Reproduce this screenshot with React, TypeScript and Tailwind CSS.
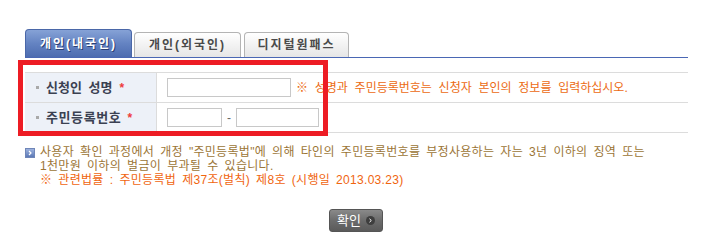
import React from "react";

const font = { fontFamily: '"Liberation Sans", "Noto Sans CJK KR", sans-serif' };

function Tab({ label, active, w }: { label: string; active?: boolean; w: string }) {
  if (active) {
    return (
      <div
        className={`${w} h-[28px] rounded-t-[4px] border border-b-0 border-[#4a67a8] bg-gradient-to-b from-[#86a2d6] via-[#6483c2] to-[#4d6cb0] flex items-center justify-center`}
      >
        <span className="text-[12px] font-bold text-white tracking-[2px] [text-shadow:1px_1px_0_#2b3f73]">{label}</span>
      </div>
    );
  }
  return (
    <div
      className={`${w} h-[25px] rounded-t-[4px] border border-b-0 border-[#b4b4b4] bg-gradient-to-b from-white to-[#e6e6e6] flex items-center justify-center`}
    >
      <span className="text-[12px] font-bold text-[#4a4a4a] tracking-[2px]">{label}</span>
    </div>
  );
}

export default function App() {
  return (
    <div className="relative w-[713px] h-[248px] bg-white overflow-hidden" style={font}>
      <div className="pl-[25px] pt-[29px] w-[688px]">
        {/* Tabs */}
        <div className="flex items-end gap-[2px] border-b border-[#4a67b4]">
          <Tab label="개인(내국인)" active w="w-[107px]" />
          <Tab label="개인(외국인)" w="w-[107px]" />
          <div className="ml-[1px]">
            <Tab label="디지털원패스" w="w-[105px]" />
          </div>
        </div>

        {/* Form table */}
        <div className="mt-[14px] border-t border-[#dcdcdc]">
          <div className="flex h-[30px] border-b border-[#dcdcdc]">
            <div className="w-[132px] shrink-0 bg-[#edf1f8] border-r border-[#dcdcdc] flex items-center pl-[11px]">
              <span className="w-[3px] h-[3px] bg-[#a9a9a9] mr-[7px]" />
              <span className="text-[13px] font-bold text-[#3b4152] [word-spacing:3px]">신청인 성명</span>
              <span className="text-[12px] font-bold text-[#ee3b3b] ml-[7px]">*</span>
            </div>
            <div className="flex items-center pl-[10px]">
              <div className="w-[124px] h-[19px] border border-[#c8c8c8] bg-white" />
              <span className="ml-[5px] text-[12px] text-[#ec6a12] whitespace-nowrap [word-spacing:3.4px]">
                ※ 성명과 주민등록번호는 신청자 본인의 정보를 입력하십시오.
              </span>
            </div>
          </div>
          <div className="flex h-[30px] border-b border-[#dcdcdc]">
            <div className="w-[132px] shrink-0 bg-[#edf1f8] border-r border-[#dcdcdc] flex items-center pl-[11px]">
              <span className="w-[3px] h-[3px] bg-[#a9a9a9] mr-[7px]" />
              <span className="text-[13px] font-bold text-[#3b4152] tracking-[0.6px]">주민등록번호</span>
              <span className="text-[12px] font-bold text-[#ee3b3b] ml-[6px]">*</span>
            </div>
            <div className="flex items-center pl-[10px]">
              <div className="w-[55px] h-[19px] border border-[#c8c8c8] bg-white" />
              <span className="w-[14px] text-center text-[12px] text-[#666]">-</span>
              <div className="w-[83px] h-[19px] border border-[#c8c8c8] bg-white" />
            </div>
          </div>
        </div>

        {/* Notice */}
        <div className="mt-[12px] flex">
          <div className="w-[10px] h-[10px] mt-[3px] mr-[5px] shrink-0 border border-[#6f86b8] bg-gradient-to-b from-[#9db2de] to-[#5c79b6] flex items-center justify-center">
            <svg width="6" height="6" viewBox="0 0 6 6">
              <path d="M2 1 L4 3 L2 5" stroke="white" strokeWidth="1.2" fill="none" />
            </svg>
          </div>
          <div className="text-[12px] leading-[14px] whitespace-nowrap [word-spacing:2.4px] tracking-[0.3px]">
            <div className="text-[#9b7536]">
              사용자 확인 과정에서 개정 "주민등록법"에 의해 타인의 주민등록번호를 부정사용하는 자는 3년 이하의 징역 또는
            </div>
            <div className="text-[#9b7536]">1천만원 이하의 벌금이 부과될 수 있습니다.</div>
            <div className="text-[#f0650f]">※ 관련법률 : 주민등록법 제37조(벌칙) 제8호 (시행일 2013.03.23)</div>
          </div>
        </div>

        {/* Button */}
        <div className="mt-[22px] flex pl-[304px]">
          <div className="w-[54px] h-[23px] rounded-[3px] border border-[#555] bg-gradient-to-b from-[#8a8a8a] via-[#6c6c6c] to-[#5a5a5a] flex items-center justify-center gap-[5px]">
            <span className="text-[13px] text-white">확인</span>
            <span className="w-[9px] h-[9px] rounded-full bg-[#3e3e3e] flex items-center justify-center">
              <svg width="5" height="5" viewBox="0 0 5 5">
                <path d="M1.5 0.8 L3.3 2.5 L1.5 4.2" stroke="white" strokeWidth="1" fill="none" />
              </svg>
            </span>
          </div>
        </div>
      </div>

      {/* Red highlight overlay */}
      <div className="absolute left-[18px] top-[60px] w-[310px] h-[76px] border-[5px] border-[#ed1c24] pointer-events-none" />
    </div>
  );
}
